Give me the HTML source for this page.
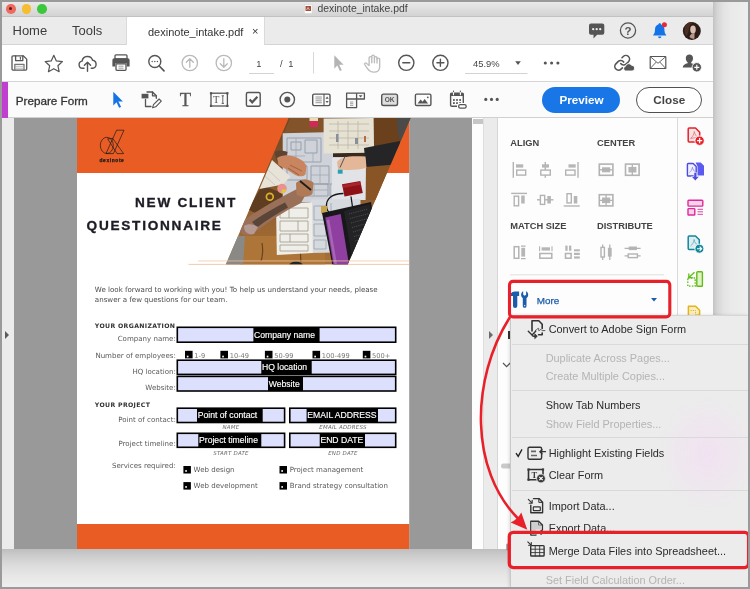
<!DOCTYPE html>
<html lang="en">
<head>
<meta charset="utf-8">
<title>dexinote_intake.pdf</title>
<style>
*{box-sizing:border-box;margin:0;padding:0}
html,body{width:750px;height:589px;overflow:hidden;background:#999}
body{position:relative;font-family:"Liberation Sans",sans-serif;color:#444}
.abs{position:absolute}
#outer{position:absolute;left:2px;top:2px;width:746px;height:585px;background:#f0f0f0;overflow:hidden;will-change:transform}
#shadowR{position:absolute;left:711px;top:0;width:35px;height:585px;background:linear-gradient(90deg,#c2c2c2 0,#d4d4d4 4px,#e2e2e2 10px,#eaeaea 18px,#eeeeee 100%)}
#shadowB{position:absolute;left:0;top:547px;width:746px;height:38px;background:linear-gradient(180deg,#bebebe 0,#cdcdcd 7px,#dbdbdb 16px,#e6e6e6 26px,#eeeeee 100%)}
#win{position:absolute;left:0;top:0;width:711px;height:547px;background:#fff;overflow:hidden}
#titlebar{position:absolute;left:0;top:0;width:711px;height:15px;background:linear-gradient(180deg,#e9e9e9,#d3d3d3);border-bottom:1px solid #c2c2c2}
.tl{position:absolute;top:2.200px;width:9.600px;height:9.600px;border-radius:50%}
#tabbar{position:absolute;left:0;top:15px;width:711px;height:28px;background:#ebebeb;border-bottom:1px solid #d4d4d4}
#tab{position:absolute;left:124px;top:0;width:139px;height:28px;background:#fff;border-left:1px solid #dadada;border-right:1px solid #dadada}
#tb1{position:absolute;left:0;top:43px;width:711px;height:37px;background:#fff;border-bottom:1px solid #d6d6d6}
#tb2{position:absolute;left:0;top:80px;width:711px;height:36px;background:#fbfbfb;border-bottom:1px solid #d0d0d0}
#doc{position:absolute;left:0;top:116px;width:470px;height:431px;background:#999;overflow:hidden}
#page{position:absolute;left:75px;top:0;width:332px;height:431px;background:#fff;overflow:hidden}
#panel{position:absolute;left:496px;top:116px;width:179.500px;height:431px;background:#fdfdfd;border-right:1px solid #d9d9d9}
#strip{position:absolute;left:675.500px;top:116px;width:35.500px;height:431px;background:#fcfcfc}
#menu{position:absolute;left:508.200px;top:312.500px;width:237.800px;height:272.500px;background:radial-gradient(ellipse 48px 58px at 196px 138px,rgba(243,222,243,.75),rgba(236,236,236,0) 100%),#ececec;border-left:1px solid #c9c9c9;border-top:1px solid #d6d6d6;box-shadow:-1px 0 3px rgba(0,0,0,.12)}
#menu .mi{position:absolute;left:37.500px;margin-top:0.500px;font-size:10.900px;color:#2a2a2a;white-space:nowrap;line-height:1}
#menu .dis{color:#b4b4b4;left:34.500px}
#menu .sep{position:absolute;left:1px;right:0;height:1px;background:#d9d9d9}
.t{position:absolute;white-space:nowrap;line-height:1}
</style>
</head>
<body>
<div id="outer">
  <div id="shadowR"></div>
  <div id="shadowB"></div>
  <div id="win">
    <div id="titlebar">
      <div class="tl" style="left:4px;background:#ee6a5f"><div class="abs" style="left:3.300px;top:3.300px;width:3px;height:3px;border-radius:50%;background:#5c1812"></div></div>
      <div class="tl" style="left:19.5px;background:#f5bd2f"></div>
      <div class="tl" style="left:35px;background:#3cc83c"></div>
      <div class="t" style="left:315.5px;top:2px;font-size:10.4px;color:#444">dexinote_intake.pdf</div>
    </div>
    <div id="tabbar">
      <div class="t" style="left:10.5px;top:7px;font-size:13px;color:#3c3c3c">Home</div>
      <div class="t" style="left:70px;top:7px;font-size:13px;color:#3c3c3c">Tools</div>
      <div id="tab">
        <div class="t" style="left:21px;top:9.800px;font-size:11px;color:#333">dexinote_intake.pdf</div>
        <div class="t" style="left:125px;top:8.600px;font-size:11px;color:#333">×</div>
      </div>
    </div>
    <div id="tb1"></div>
    <div id="tb2">
      <div class="abs" style="left:0;top:0;width:6px;height:36px;background:#c13fd0"></div>
      <div class="t" style="left:13.700px;top:12.500px;font-size:11.700px;color:#333;-webkit-text-stroke:0.300px #333">Prepare Form</div>
      <div class="abs" style="left:540px;top:5px;width:78px;height:25.500px;border-radius:13px;background:#1976e6;color:#fff;font-weight:bold;font-size:11.700px;text-align:center;line-height:26px;padding-left:1px">Preview</div>
      <div class="abs" style="left:634px;top:5px;width:65.500px;height:25.500px;border-radius:13px;background:#fff;border:1px solid #505050;color:#444;font-weight:bold;font-size:11.700px;text-align:center;line-height:24.500px;padding-left:1px">Close</div>
    </div>
    <div id="doc">
      <svg class="abs" style="left:-2px;top:-118px" width="750" height="589" viewBox="0 0 750 589" font-family="DejaVu Sans, Liberation Sans, sans-serif">
      <defs>
        <clipPath id="para"><path d="M288.700 118H410.600L347.800 264.300H225.900z"/></clipPath>
        <linearGradient id="wood" x1="0" y1="0" x2="0" y2="1"><stop offset="0" stop-color="#6f4524"/><stop offset="0.450" stop-color="#8a5a2c"/><stop offset="1" stop-color="#a87038"/></linearGradient>
      </defs>
      <rect x="77" y="118" width="332.200" height="432" fill="#fff"/>
      <rect x="77" y="118" width="332.200" height="55" fill="#e95d25"/>
      <rect x="77" y="524" width="332.200" height="26" fill="#e95d25"/>
      <!-- peach lines under photo -->
      <rect x="188.500" y="263.900" width="220.700" height="0.900" fill="#f3c4a2"/>
      <!-- photo -->
      <g clip-path="url(#para)">
        <rect x="220" y="118" width="195" height="148" fill="url(#wood)"/>
        <path d="M290 118h34v15h-40z" fill="#83532a"/>
        <path d="M262 186c8 2 18 6 26 10l-26 16c-6 2-10 0-14-3z" fill="#5e3d20"/>
        <path d="M374 118h26v30l-26 4z" fill="#6b401d"/>
        <path d="M366 166h24l-14 34h-10z" fill="#8a5526"/>
        <path d="M245 236h80v30h-85z" fill="#ad7538"/>
        <path d="M262 243c1 6 1 12-1 18M300 240c1 7 0 14 1 22" stroke="#6a4220" stroke-width="1.200" fill="none"/>
        <path d="M225 236h20l-2 30h-20z" fill="#8b8985"/>
        <path d="M397 118h14v24l-10 2c-3-8-4-16-4-26z" fill="#4b4a49"/>
        <!-- blueprint -->
        <path d="M282.700 133.300l42-1 41 1.500-.5 66-35 .5-.5 3-47-1.500z" fill="#cfd3d9"/>
        <g fill="none" stroke="#8f98a6" stroke-width="0.900">
          <path d="M287 138h34v24h-34zM291 142h10v8h-10zM305 140h12v13h-12zM287 166h20v14h-20zM311 166h18v18h-18zM300 184h28v12h-28zM333 172h28v8h-28zM330 184h10v12h-10zM346 150h16v4h-16z"/>
          <path d="M296 138v24M313 153v9M287 156h18M320 166v18M311 175h18M300 190h28M314 184v12M337 172v8M345 172v8M353 172v8" stroke="#a4acb8"/>
        </g>
        <path d="M332 158h34l-.5 42h-33.500z" fill="#e1e3e7"/>
        <path d="M310.500 199.500l50-.5.500 53-50 1z" fill="#d6dade"/>
        <g fill="none" stroke="#99a1ad" stroke-width="0.800"><path d="M314 206h12v14h-12zM314 224h12v12h-12zM314 240h12v9h-12zM331 203v22M331 230h22v18h-22z"/></g>
        <!-- top right paper on top of blueprint -->
        <path d="M333 152.500h32v4.500h-32z" fill="#3a2a1e"/>
        <path d="M323.600 118.600l50-.6.500 34.500-50.500 1z" fill="#e6e2d3"/>
        <g stroke="#bcb6a4" stroke-width="0.800" fill="none"><path d="M329 124h40M329 131h40M329 138h40M329 145h40M338 121v28M348 121v28M358 121v28"/></g>
        <rect x="336" y="134" width="2.500" height="8" fill="#8a8f99"/><rect x="355" y="138" width="3" height="6" fill="#8a8f99"/><rect x="364" y="136" width="2" height="6" fill="#b86a4a"/>
        <!-- lower-left sketch paper -->
        <path d="M276 204l36-1.500.800 50.500-36 2z" fill="#efeee8"/>
        <g fill="none" stroke="#9c988c" stroke-width="0.800"><path d="M280 208h28v10h-28zM280 221h28v10h-28zM280 234h28v8h-28zM280 245h28v6h-28zM289 208v10M298 221v10M290 234v8"/></g>
        <!-- left notebook -->
        <path d="M272 160l18.500 16.500-7.500 8-23.500 4.500z" fill="#e7e3d8"/>
        <path d="M268 170l12 11M265 176l10 9" stroke="#c5bfb0" stroke-width="0.700"/>
        <!-- sleeve + right hand -->
        <path d="M364 148l36-7v23l-34 3z" fill="#252528"/>
        <path d="M337 162c3-5 12-6.500 28.500-5.500l1 11c-9 3-21 3-28.500 1.500z" fill="#e3b797"/>
        <path d="M345 156.500l-5 11" stroke="#555" stroke-width="1"/>
        <rect x="337.800" y="169.600" width="4.800" height="4.100" fill="#2a9fb0"/>
        <!-- left hand -->
        <path d="M274.500 152c3-2 8-2 13 0l-1.500 7-9 3z" fill="#5e4232"/>
        <path d="M277 158c7-5 18-3 26 3l3.500 4.500-1 9c-3 3-8 2-12-.5l-6-4-9-5z" fill="#c98560"/>
        <path d="M290 165l12 6M288 168l11 7" stroke="#9a5f40" stroke-width="0.900"/>
        <!-- arm w/ tattoo + hand with pen -->
        <path d="M243 221c12-9 34-22 54-32l9 5-5 9c-18 9-36 21-48 31-5 3-12 1-14-4-1-4 1-7 4-9z" fill="#9a7058"/>
        <path d="M252 222c10-7 22-14 33-19.500l3 5c-11 6-22 13-31 20z" fill="#5a4538"/>
        <path d="M244 226c4-3 10-2 14 1l-4 7c-5 1-10-1-10-8z" fill="#b59a94"/>
        <path d="M296 183c5-4.500 12-4.500 17.500-.5l-1 11.500c-5 3.500-11 3.500-16 .5z" fill="#b07a56"/>
        <path d="M300 181l11 9" stroke="#1c1c1c" stroke-width="1.800"/>
        <!-- red box -->
        <path d="M342 184.300l18.300-3.300 2.500 12-18.300 3.500z" fill="#8f1118"/>
        <path d="M342.500 185l17.500-3.200.8 3-17.600 3.300z" fill="#a8232a"/>
        <!-- cable -->
        <path d="M343.500 193.500c-12 0-17.500 5.500-17 13s8 10 16 6M351 196.500l2 14" fill="none" stroke="#161616" stroke-width="1.300"/>
        <!-- tape & stickers -->
        <circle cx="282" cy="188.600" r="4.800" fill="#e9938f"/><path d="M282 189.500h4.700a4.800 4.800 0 0 1-5.700 3.800z" fill="#e3c63c"/>
        <circle cx="269.800" cy="196.800" r="3.400" fill="none" stroke="#d8b02e" stroke-width="1.700"/>
        <rect x="309.500" y="118" width="8.500" height="3" fill="#e8dcb0"/><rect x="309.500" y="121" width="8.500" height="6" fill="#cf2a58"/>
        <rect x="321" y="206" width="6" height="7.500" fill="#c9a348"/>
        <!-- laptop -->
        <path d="M322 213l49-11 10 66h-48z" fill="#18181a"/>
        <path d="M325.200 217.500l15.500-3.500 8.500 52h-15.500z" fill="#8e3f9f"/>
        <path d="M326.800 220l2.500-.6 8 46.600h-2.500z" fill="#a765b5"/>
        <path d="M344 211l26-7 4 46-22 8z" fill="#232326"/>
        <g stroke="#55555c" stroke-width="0.800" stroke-dasharray="1.200 1"><path d="M349 214l19-5M350 218.500l19-5M351 223l19-5M352 227.500l18-5M353 232l17-5M354 236.500l15-4M355 241l12-3"/></g>
        <path d="M289 266a7 4.500 0 0 1 14 0z" fill="#262626"/>
      </g>
      <rect x="198" y="260.500" width="211.200" height="0.900" fill="#f3c4a2" opacity="0.850"/>
      <!-- logo -->
      <g fill="none" stroke="#1a1a1a" stroke-width="0.700" stroke-linejoin="round">
        <ellipse cx="106.800" cy="145.400" rx="6.500" ry="8.100"/>
        <path d="M116.600 130.200h7.400l-10.600 23.400h-7.400z"/>
        <path d="M107.600 138.800l5.100-.4 10.900 15.200h-6.600z"/>
      </g>
      <text x="112" y="161.700" font-family="Liberation Sans, sans-serif" font-size="4.900" font-weight="bold" fill="#1a1a1a" stroke="#1a1a1a" stroke-width="0.250" text-anchor="middle" letter-spacing="0.600">dexinote</text>
      <!-- heading -->
      <g font-family="Liberation Sans, sans-serif" font-weight="bold" font-size="13.600" fill="#1c1c24" stroke="#1c1c24" stroke-width="0.350" letter-spacing="1.750">
        <text x="135" y="206.700">NEW CLIENT</text>
        <text x="86.600" y="229.600">QUESTIONNAIRE</text>
      </g>
<g font-size="7.050" fill="#5a5a5a">
<g font-weight="bold" fill="#333" font-size="6.200" letter-spacing="0.350"><text x="94.800" y="327.700">YOUR ORGANIZATION</text><text x="94.800" y="406.600">YOUR PROJECT</text></g>
<g text-anchor="end"><text x="175.800" y="340.7">Company name:</text><text x="175.800" y="357.8">Number of employees:</text><text x="175.800" y="373.8">HQ location:</text><text x="175.800" y="389.6">Website:</text><text x="175.800" y="421.7">Point of contact:</text><text x="175.800" y="446">Project timeline:</text><text x="175.800" y="468">Services required:</text></g>
<rect x="177.3" y="327.3" width="218.4" height="14.9" fill="#dde0fd" stroke="#000" stroke-width="1.600"/><rect x="253.4" y="327.3" width="66.2" height="14.9" fill="#000"/><text x="254.1" y="337.6" font-family="Liberation Sans, sans-serif" font-size="8.650" fill="#fff" stroke="#fff" stroke-width="0.150">Company name</text>
<rect x="177.3" y="360.2" width="218.4" height="14.2" fill="#dde0fd" stroke="#000" stroke-width="1.600"/><rect x="261.3" y="360.2" width="50.4" height="14.2" fill="#000"/><text x="262.0" y="370.2" font-family="Liberation Sans, sans-serif" font-size="8.650" fill="#fff" stroke="#fff" stroke-width="0.150">HQ location</text>
<rect x="177.3" y="376.4" width="218.4" height="14.6" fill="#dde0fd" stroke="#000" stroke-width="1.600"/><rect x="268" y="376.4" width="35.0" height="14.6" fill="#000"/><text x="268.7" y="386.6" font-family="Liberation Sans, sans-serif" font-size="8.650" fill="#fff" stroke="#fff" stroke-width="0.150">Website</text>
<rect x="177.3" y="408.2" width="107.3" height="14.3" fill="#dde0fd" stroke="#000" stroke-width="1.600"/><rect x="197" y="408.2" width="65.7" height="14.3" fill="#000"/><text x="197.7" y="418.2" font-family="Liberation Sans, sans-serif" font-size="8.650" fill="#fff" stroke="#fff" stroke-width="0.150">Point of contact</text>
<rect x="289.8" y="408.2" width="105.9" height="14.3" fill="#dde0fd" stroke="#000" stroke-width="1.600"/><rect x="306.6" y="408.2" width="71.4" height="14.3" fill="#000"/><text x="307.3" y="418.2" font-family="Liberation Sans, sans-serif" font-size="8.650" fill="#fff" stroke="#fff" stroke-width="0.150">EMAIL ADDRESS</text>
<rect x="177.3" y="433.3" width="107.3" height="14.0" fill="#dde0fd" stroke="#000" stroke-width="1.600"/><rect x="198.3" y="433.3" width="63.0" height="14.0" fill="#000"/><text x="199.0" y="443.2" font-family="Liberation Sans, sans-serif" font-size="8.650" fill="#fff" stroke="#fff" stroke-width="0.150">Project timeline</text>
<rect x="289.8" y="433.3" width="105.9" height="14.0" fill="#dde0fd" stroke="#000" stroke-width="1.600"/><rect x="319.7" y="433.3" width="45.3" height="14.0" fill="#000"/><text x="320.4" y="443.2" font-family="Liberation Sans, sans-serif" font-size="8.650" fill="#fff" stroke="#fff" stroke-width="0.150">END DATE</text>
<rect x="185" y="350.8" width="7.6" height="7.6" fill="#000"/><rect x="186.8" y="355.7" width="1.700" height="1.700" fill="#f4f4f4"/><text x="194.3" y="357.700" fill="#777" font-size="6.700">1-9</text><rect x="220.4" y="350.8" width="7.6" height="7.6" fill="#000"/><rect x="222.20000000000002" y="355.7" width="1.700" height="1.700" fill="#f4f4f4"/><text x="229.70000000000002" y="357.700" fill="#777" font-size="6.700">10-49</text><rect x="264.9" y="350.8" width="7.6" height="7.6" fill="#000"/><rect x="266.7" y="355.7" width="1.700" height="1.700" fill="#f4f4f4"/><text x="274.2" y="357.700" fill="#777" font-size="6.700">50-99</text><rect x="312.5" y="350.8" width="7.6" height="7.6" fill="#000"/><rect x="314.3" y="355.7" width="1.700" height="1.700" fill="#f4f4f4"/><text x="321.8" y="357.700" fill="#777" font-size="6.700">100-499</text><rect x="362.8" y="350.8" width="7.6" height="7.6" fill="#000"/><rect x="364.6" y="355.7" width="1.700" height="1.700" fill="#f4f4f4"/><text x="372.1" y="357.700" fill="#777" font-size="6.700">500+</text>
<g font-style="italic" font-size="5.500" fill="#6a6a6a" text-anchor="middle" letter-spacing="0.200"><text x="231" y="429">NAME</text><text x="343" y="429">EMAIL ADDRESS</text><text x="231" y="454.700">START DATE</text><text x="343" y="454.700">END DATE</text></g>
<rect x="183.4" y="466" width="7.5" height="7.5" fill="#000"/><rect x="185.20000000000002" y="470.1" width="1.700" height="1.700" fill="#f4f4f4"/><text x="193.6" y="472">Web design</text><rect x="279.5" y="466" width="7.5" height="7.5" fill="#000"/><rect x="281.3" y="470.1" width="1.700" height="1.700" fill="#f4f4f4"/><text x="289.7" y="472">Project management</text><rect x="183.4" y="482.1" width="7.5" height="7.5" fill="#000"/><rect x="185.20000000000002" y="486.1" width="1.700" height="1.700" fill="#f4f4f4"/><text x="193.6" y="488.1">Web development</text><rect x="279.5" y="482.1" width="7.5" height="7.5" fill="#000"/><rect x="281.3" y="486.1" width="1.700" height="1.700" fill="#f4f4f4"/><text x="289.7" y="488.1">Brand strategy consultation</text>
</g>
      <!-- intro -->
      <g font-size="7.100" fill="#4a4a4a">
        <text x="94.800" y="291.600">We look forward to working with you! To help us understand your needs, please</text>
        <text x="94.800" y="301.700">answer a few questions for our team.</text>
      </g>
    </svg>

    </div>
    <div class="abs" style="left:470px;top:116px;width:12px;height:431px;background:#fdfdfd;border-right:1px solid #dedede"><div class="abs" style="left:1px;top:0.500px;width:10px;height:5px;background:#c6c6c6"></div></div>
    <div class="abs" style="left:482px;top:116px;width:14px;height:431px;background:#ebebeb;border-right:1px solid #d6d6d6"><div class="abs" style="left:5px;top:212.500px;width:0;height:0;border-left:4.500px solid #6a6a6a;border-top:4px solid transparent;border-bottom:4px solid transparent"></div></div>
    <div class="abs" style="left:0;top:116px;width:12px;height:431px;background:#ebebeb"><div class="abs" style="left:3px;top:212.500px;width:0;height:0;border-left:4.500px solid #5a5a5a;border-top:4.200px solid transparent;border-bottom:4.200px solid transparent"></div></div>
    <div id="panel"><svg class="abs" style="left:-498px;top:-118px" width="750" height="589" viewBox="0 0 750 589" font-family="Liberation Sans, sans-serif">
      <g font-size="9.300" font-weight="bold" fill="#444">
        <text x="510.300" y="146.200">ALIGN</text><text x="597" y="146.200">CENTER</text>
        <text x="510.300" y="229.400">MATCH SIZE</text><text x="597" y="229.400">DISTRIBUTE</text>
      </g>
      <g fill="none" stroke="#b3b3b3" stroke-width="1.200">
        <!-- align left -->
        <path d="M513.300 162v15.700" stroke-width="1.400"/><rect x="516" y="164.300" width="7.200" height="3.300" fill="#b6b6b6" stroke="none"/><rect x="516.700" y="170.100" width="9" height="5" stroke-width="1.400"/>
        <!-- align center h -->
        <path d="M545.300 162v15.700" stroke-width="1.400"/><rect x="542" y="164.300" width="7" height="3.300" fill="#b6b6b6" stroke="none"/><rect x="540.800" y="170.100" width="9.500" height="5" fill="#fdfdfd" stroke-width="1.400"/>
        <!-- align right -->
        <path d="M578 162v15.700" stroke-width="1.400"/><rect x="568.500" y="164.300" width="7.200" height="3.300" fill="#b6b6b6" stroke="none"/><rect x="565.700" y="170.100" width="9.300" height="5" stroke-width="1.400"/>
        <!-- center 1 -->
        <rect x="599.300" y="164.100" width="13.600" height="11.200" stroke-width="1.600"/><rect x="602" y="167.300" width="8.200" height="5" fill="#b6b6b6" stroke="none"/><path d="M599.300 169.800h13.600" stroke-width="1.300"/>
        <!-- center 2 -->
        <rect x="625.500" y="164.100" width="13.600" height="11.200" stroke-width="1.600"/><rect x="628.400" y="166.900" width="8" height="5.600" fill="#b6b6b6" stroke="none"/><path d="M632.300 164.100v11.200" stroke-width="1.300"/>
        <!-- row 2: align top -->
        <path d="M511.200 193.400h15.800" stroke-width="1.400"/><rect x="514.200" y="196.200" width="4.400" height="9.600" stroke-width="1.400"/><rect x="521.200" y="195.500" width="3.500" height="8" fill="#b6b6b6" stroke="none"/>
        <!-- align middle v -->
        <path d="M537 199.800h16.500" stroke-width="1.400"/><rect x="540.400" y="195.400" width="4.300" height="9" fill="#fdfdfd" stroke-width="1.400"/><rect x="547.300" y="196" width="3.600" height="7.500" fill="#b6b6b6" stroke="none"/>
        <!-- align bottom -->
        <path d="M563.700 206h16" stroke-width="1.400"/><rect x="567" y="193.700" width="4.300" height="9.200" stroke-width="1.400"/><rect x="573.800" y="196" width="3.500" height="7.500" fill="#b6b6b6" stroke="none"/>
        <!-- center both -->
        <rect x="599.300" y="194.700" width="13.600" height="11.200" stroke-width="1.600"/><rect x="602" y="197.500" width="8.200" height="5.600" fill="#b6b6b6" stroke="none"/><path d="M599.300 200.300h13.600M606.100 194.700v11.200" stroke-width="1.300"/>
        <!-- match size -->
        <rect x="514.200" y="246.700" width="4.600" height="11.600" stroke-width="1.500"/><rect x="521.300" y="247.800" width="3.800" height="8.800" fill="#b6b6b6" stroke="none"/><path d="M521 246.100h4.600M521 258.600h4.600" stroke-width="1.100"/>
        <rect x="539.800" y="253.500" width="12" height="4.700" stroke-width="1.500"/><rect x="541.600" y="247.300" width="8.400" height="3.300" fill="#b6b6b6" stroke="none"/><path d="M539.600 246.300v5M552 246.300v5" stroke-width="1.100"/>
        <rect x="565.500" y="253.500" width="5.600" height="4.700" stroke-width="1.500"/><rect x="565.300" y="245.600" width="2.300" height="5.200" fill="#b6b6b6" stroke="none"/><rect x="569" y="245.600" width="2.300" height="5.200" fill="#b6b6b6" stroke="none"/><rect x="574" y="249.300" width="5.800" height="2" fill="#b6b6b6" stroke="none"/><rect x="574" y="252.800" width="5.800" height="2.200" fill="#b6b6b6" stroke="none"/><rect x="574" y="256.400" width="5.800" height="2.200" fill="#b6b6b6" stroke="none"/>
        <!-- distribute -->
        <rect x="601" y="247.400" width="3.400" height="9.600" stroke-width="1.400"/><rect x="607.900" y="247.800" width="3.800" height="8.800" fill="#b6b6b6" stroke="none"/><path d="M602.700 244.600v3M602.700 257v3M609.800 244.600v15.400" stroke-width="1.300"/>
        <rect x="628.200" y="254" width="9.200" height="3.600" stroke-width="1.400"/><rect x="628.700" y="246.500" width="8.200" height="3.600" fill="#b6b6b6" stroke="none"/><path d="M624.600 248.300h16M624.600 255.800h3.600M637.400 255.800h3.200" stroke-width="1.300"/>
      </g>
      <rect x="510" y="274.400" width="154" height="0.900" fill="#dcdcdc"/>
      <!-- More row -->
      <g fill="#1b5cab">
        <path d="M511 293.200c1.500-1.300 3.300-1.600 5.200-1.600h2.900v4.300h-1.800v10a2.150 2.150 0 0 1-4.300 0v-10h-2z"/>
        <path d="M523.200 291.200v3.600l1.450.9 1.450-.9v-3.600c1.300.6 2.100 2 2.100 3.500 0 1.500-.6 2.600-1.700 3.300v7.900a1.850 1.850 0 0 1-3.700 0v-7.900c-1.100-.700-1.700-1.800-1.700-3.300 0-1.500.8-2.900 2.100-3.500z"/>
        <circle cx="524.650" cy="305.600" r="0.700" fill="#fff"/>
        <path d="M651 298h6l-3 3.600z"/>
      </g>
      <text x="536.700" y="303.800" font-size="9.900" fill="#1b5cab" stroke="#1b5cab" stroke-width="0.250">More</text>
      <!-- hidden-behind-menu bits -->
      <path d="M503 363l3.600 3.600 3.600-3.600" fill="none" stroke="#555" stroke-width="1.200"/>
      <rect x="508" y="331" width="2.500" height="8" fill="#333"/>
      <rect x="501" y="463.500" width="12" height="5" rx="2.500" fill="#c9c9c9"/>
    </svg>
</div>
    <div id="strip"><svg class="abs" style="left:-677.500px;top:-118px" width="750" height="589" viewBox="0 0 750 589">
      <!-- red create pdf -->
      <path d="M689.200 128h6.300l4.200 4.200v9.800h-10.500a1 1 0 0 1-1-1v-12a1 1 0 0 1 1-1z" fill="#f7e3e3" stroke="#e8202a" stroke-width="1.500" stroke-linejoin="round"/>
      <path d="M690.500 138.500c2-1.500 3.500-4 3.800-7 .5 3 2 5 4 6-2.500 0-5.500.5-7.800 1z" fill="none" stroke="#e8606a" stroke-width="0.700"/>
      <circle cx="699.600" cy="140.700" r="4.700" fill="#e8202a" stroke="#fff" stroke-width="0.900"/><path d="M697 140.700h5.200M699.600 138.100v5.200" stroke="#fff" stroke-width="1.300"/>
      <!-- blue export -->
      <path d="M688.200 163.500h5l3 3v9.500h-8a.8.800 0 0 1-.8-.8v-10.900a.8.800 0 0 1 .8-.8z" fill="#eeeefc" stroke="#4b4be0" stroke-width="1.400" stroke-linejoin="round"/>
      <path d="M695.500 162.500h5.200l3.300 3.300v9.700h-6.500v-9.200z" fill="#5a5af0"/>
      <path d="M689.500 172.500c1.500-1.200 2.600-3 2.900-5.300.4 2.300 1.500 3.800 3 4.600" fill="none" stroke="#7a7ae8" stroke-width="0.700"/>
      <path d="M694 172.500h2.600v4h2.600l-3.900 4.300-3.900-4.300h2.600z" fill="#4b4be0" stroke="#fff" stroke-width="0.500"/>
      <!-- pink organize -->
      <rect x="688" y="200.300" width="14.800" height="5.800" rx="0.800" fill="#f8d4ea" stroke="#e0289a" stroke-width="1.400"/>
      <rect x="688" y="208.600" width="6.800" height="6.400" rx="0.600" fill="#f8d4ea" stroke="#e0289a" stroke-width="1.400"/>
      <path d="M697.500 209.300h5.500M697.500 211.800h5.500M697.500 214.300h5.500" stroke="#e0289a" stroke-width="0.900"/>
      <!-- teal send -->
      <path d="M689.200 236h6.300l3.800 3.800v9.700h-10.100a1 1 0 0 1-1-1v-11.500a1 1 0 0 1 1-1z" fill="#dcecf0" stroke="#12869a" stroke-width="1.500" stroke-linejoin="round"/>
      <path d="M690.500 246c2-1.500 3.300-3.600 3.600-6.500.5 2.800 1.800 4.600 3.600 5.600" fill="none" stroke="#4aa3b3" stroke-width="0.700"/>
      <circle cx="699.400" cy="248.700" r="4.500" fill="#12869a" stroke="#fff" stroke-width="0.900"/><path d="M697 248.700h4.400M699.600 246.600l2.100 2.100-2.100 2.100" stroke="#fff" stroke-width="1.100" fill="none"/>
      <!-- green -->
      <rect x="696.800" y="271.800" width="5.600" height="14.400" rx="0.800" fill="#e0f3c8" stroke="#62bd18" stroke-width="1.400"/>
      <rect x="687.800" y="278" width="7.400" height="8.200" fill="none" stroke="#62bd18" stroke-width="1.300" stroke-dasharray="1.600 1.300"/>
      <path d="M694.500 272.300l-5.300 5M688.800 273.600v4h4" stroke="#62bd18" stroke-width="1.300" fill="none"/>
      <!-- yellow -->
      <path d="M688.400 306.300h7.200l4 4v8.700h-11.200z" fill="#f8ecc0" stroke="#e6b417" stroke-width="1.500" stroke-linejoin="round"/>
      <path d="M690.500 310.500h5v4h4" fill="none" stroke="#e6b417" stroke-width="1" stroke-dasharray="1.200 1"/>
    </svg>
</div>
  </div>

<svg id="chrome" class="abs" style="left:-2px;top:-2px" width="750" height="589" viewBox="0 0 750 589" font-family="Liberation Sans, sans-serif">
  <!-- title pdf icon -->
  <rect x="304.5" y="4.5" width="7.5" height="9" fill="#fff" stroke="#d9d0cc" stroke-width="0.5"/>
  <rect x="305.5" y="6" width="5.5" height="5" fill="#a0503c"/>
  <path d="M306.5 10 L308 7.5 L309.5 10" stroke="#f3e3dc" stroke-width="0.7" fill="none"/>
  <!-- tabbar right icons -->
  <g id="chat"><path d="M591 23.5h11.3a2 2 0 0 1 2 2v7.2a2 2 0 0 1-2 2h-5.2l-3.6 3.8v-3.8h-2.5a2 2 0 0 1-2-2v-7.2a2 2 0 0 1 2-2z" fill="#555"/>
    <circle cx="593.2" cy="29.2" r="1.15" fill="#eee"/><circle cx="596.7" cy="29.2" r="1.15" fill="#eee"/><circle cx="600.2" cy="29.2" r="1.15" fill="#eee"/></g>
  <g id="help"><circle cx="628" cy="30.5" r="7.6" fill="none" stroke="#555" stroke-width="1.3"/>
    <text x="628" y="34.6" font-size="11.5" font-weight="bold" fill="#555" text-anchor="middle">?</text></g>
  <g id="bell"><path d="M659.7 23.2c1 0 1.4.7 1.4 1.4 2.2.7 3.3 2.6 3.3 5 0 2.600.6 4.300 1.800 5.400v.6h-13v-.6c1.200-1.100 1.800-2.800 1.800-5.400 0-2.400 1.100-4.300 3.300-5 0-.7.400-1.400 1.400-1.400z" fill="#1473e6"/>
    <path d="M658 36.600h3.400a1.700 1.700 0 0 1-3.400 0z" fill="#1473e6"/>
    <circle cx="664.4" cy="24.800" r="2.500" fill="#e8283a"/></g>
  <g id="avatar"><circle cx="691.8" cy="31" r="9" fill="#2b1c17"/>
    <ellipse cx="693" cy="29.500" rx="2.800" ry="4" fill="#d9bdb0"/>
    <path d="M689.500 36.500c1-2.500 3-3.500 5-3.500v5.500c-2 .5-4 0-5-2z" fill="#b89588"/>
    <path d="M685 27c1-4 5-6 9-4.500-3 .5-4.500 3-5 6s-1 6-2.500 7.500c-2-2-2.500-6-1.500-9z" fill="#4a2e22"/></g>

  <!-- ===== toolbar 1 ===== -->
  <g fill="none" stroke="#555" stroke-width="1.300" stroke-linejoin="round" stroke-linecap="round">
    <!-- save -->
    <path d="M13 55.800h10.200l3.500 3.300v10a1 1 0 0 1-1 1h-12.700a1 1 0 0 1-1-1v-12.300a1 1 0 0 1 1-1z"/>
    <path d="M15.600 56v4.600h7.200v-4.600"/>
    <path d="M14.800 70v-5.700h9.200v5.700" stroke="#777"/>
    <path d="M15.500 66.300h7.800M15.500 68.200h7.800" stroke="#aaa" stroke-width="0.800"/>
    <path d="M20.400 57.300v2" stroke-width="1.100"/>
    <!-- star -->
    <path d="M53.800 55.300l2.550 5.600 6.100.65-4.550 4.150 1.250 6-5.350-3.050-5.350 3.050 1.250-6-4.550-4.150 6.100-.65z" stroke-width="1.200"/>
    <!-- cloud upload -->
    <path d="M84 68.300h-1.400a3.600 3.600 0 0 1-.5-7.150 5.400 5.400 0 0 1 10.500-.9 4.100 4.100 0 0 1 .3 8.050h-1.700" stroke-width="1.400"/>
    <path d="M87.500 71.300v-8.500M84.400 65.300l3.100-3.100 3.100 3.100" stroke-width="1.400"/>
  </g>
  <!-- printer -->
  <g>
    <path d="M116 54.800h10a1 1 0 0 1 1 1v3h-12v-3a1 1 0 0 1 1-1z" fill="none" stroke="#555" stroke-width="1.300"/>
    <path d="M114.200 58.300h13.600a1.800 1.800 0 0 1 1.800 1.800v6.500h-2.800v-3h-11.600v3h-2.800v-6.500a1.800 1.800 0 0 1 1.800-1.800z" fill="#555"/>
    <rect x="116" y="63.800" width="10" height="6.500" rx="0.800" fill="#fff" stroke="#555" stroke-width="1.300"/>
    <path d="M118.500 66.200h5M118.500 68.200h5" stroke="#888" stroke-width="0.800"/>
  </g>
  <!-- zoom magnifier -->
  <g fill="none" stroke="#555" stroke-width="1.400" stroke-linecap="round">
    <circle cx="154.800" cy="61.500" r="6"/>
    <path d="M159.300 66l4.700 4.800" stroke-width="1.700"/>
    <circle cx="152.200" cy="61.500" r="0.700" fill="#555" stroke="none"/><circle cx="154.800" cy="61.500" r="0.700" fill="#555" stroke="none"/><circle cx="157.400" cy="61.500" r="0.700" fill="#555" stroke="none"/>
  </g>
  <!-- up/down (disabled) -->
  <g fill="none" stroke="#b9b9b9" stroke-width="1.300" stroke-linecap="round" stroke-linejoin="round">
    <circle cx="189.800" cy="63" r="7.700"/>
    <path d="M189.800 67.300v-8.300M186.300 62.200l3.500-3.500 3.500 3.500"/>
    <circle cx="223.800" cy="63" r="7.700"/>
    <path d="M223.800 58.700v8.300M220.300 63.800l3.500 3.500 3.500-3.500"/>
  </g>
  <text x="258.800" y="66.800" font-size="9.400" fill="#444" text-anchor="middle">1</text>
  <rect x="249" y="73" width="25" height="0.800" fill="#c8c8c8"/>
  <text x="280" y="66.800" font-size="9.400" fill="#444">/</text>
  <text x="288.300" y="66.800" font-size="9.400" fill="#444">1</text>
  <rect x="313" y="52" width="0.900" height="21.500" fill="#d4d4d4"/>
  <!-- grey cursor -->
  <path d="M334.300 55.300l9.300 9.500h-4.400l2.600 5.400-1.900.9-2.600-5.500-3 3.100z" fill="#b4b4b4"/>
  <!-- hand -->
  <g fill="none" stroke="#bdbdbd" stroke-width="1.150" stroke-linejoin="round" stroke-linecap="round" transform="translate(364.200 0) scale(1.200 1.030) translate(-364.200 -1.800)">
    <path d="M368.300 63.500v-5.700a1.100 1.100 0 0 1 2.200 0v-1.300a1.100 1.100 0 0 1 2.200 0v1.300a1.100 1.100 0 0 1 2.200 0v1.500a1.100 1.100 0 0 1 2.200 0v7.200c0 3.300-2 5.300-5 5.300-2.600 0-3.800-1.100-5-3.100l-2.500-4.300c-.6-1.100.7-2 1.600-1.100l2.100 2.200z"/>
    <path d="M370.500 57.800v5M372.700 57.800v5M374.900 58.500v4.500"/>
  </g>
  <!-- minus / plus -->
  <g fill="none" stroke="#555" stroke-width="1.400" stroke-linecap="round">
    <circle cx="406.300" cy="62.800" r="7.600"/><path d="M402.800 62.800h7"/>
    <circle cx="440.400" cy="62.800" r="7.600"/><path d="M436.900 62.800h7M440.400 59.300v7"/>
  </g>
  <text x="473" y="66.800" font-size="9.400" fill="#444">45.9%</text>
  <rect x="465" y="73" width="62.500" height="0.800" fill="#c8c8c8"/>
  <path d="M515.200 61.300h5.600l-2.800 3.600z" fill="#555"/>
  <circle cx="545.300" cy="63" r="1.550" fill="#555"/><circle cx="551.600" cy="63" r="1.550" fill="#555"/><circle cx="557.900" cy="63" r="1.550" fill="#555"/>
  <!-- link + cloud -->
  <g fill="none" stroke="#555" stroke-width="2.150" stroke-linecap="round" stroke-linejoin="round" transform="translate(613.300 53.900) scale(0.740)">
    <path d="M10 13a5 5 0 0 0 7.540.540l3-3a5 5 0 0 0-7.070-7.070l-1.720 1.710"/>
    <path d="M14 11a5 5 0 0 0-7.540-.540l-3 3a5 5 0 0 0 7.070 7.070l1.710-1.710"/>
  </g>
  <path d="M625.300 71a2.700 2.700 0 0 1-.1-5.300 3.600 3.600 0 0 1 6.700-1 3.100 3.100 0 0 1 .6 6.300z" fill="#555" stroke="#fff" stroke-width="1" transform="translate(628.500 71) scale(0.900) translate(-628.500 -71)"/>
  <!-- mail -->
  <g fill="none" stroke="#555" stroke-width="1.200" stroke-linejoin="round">
    <rect x="650.200" y="56.500" width="15.600" height="12" rx="0.600"/>
    <path d="M650.500 56.800l7.500 6.500 7.500-6.500M650.500 68.200l5.800-6.200M665.500 68.200l-5.800-6.200" stroke-width="0.900"/>
  </g>
  <!-- person + -->
  <path d="M689.400 54.400a3.600 3.600 0 0 1 3.600 3.800c0 1.800-.8 3.200-1.800 4v1c2.600.7 4.600 1.600 4.900 4.300h-13.400c.3-2.700 2.300-3.600 4.900-4.300v-1c-1-.8-1.800-2.200-1.800-4a3.600 3.600 0 0 1 3.600-3.800z" fill="#555"/>
  <circle cx="696.800" cy="67.300" r="4.700" fill="#555" stroke="#fff" stroke-width="0.900"/>
  <path d="M694.300 67.300h5M696.800 64.800v5" stroke="#fff" stroke-width="1.200"/>

  <!-- ===== toolbar 2 ===== -->
  <path d="M113.300 91.800l9.600 9.600h-4.500l2.700 5.500-2 .900-2.600-5.600-3.200 3.200z" fill="#1473e6"/>
  <!-- edit icon -->
  <g fill="none" stroke="#555" stroke-width="1.300" stroke-linejoin="round" stroke-linecap="round">
    <path d="M147 92h5.500l3.800 3.800v2.500"/><path d="M152.500 92v3.800h3.800"/>
    <path d="M145.500 99.500v7h5.500"/>
    <path d="M152.500 107.800l1-3.200 5.600-5.600 2.200 2.200-5.600 5.600z" stroke-width="1.100"/>
  </g>
  <rect x="141.600" y="93.800" width="6.800" height="4.600" fill="#555"/>
  <text x="185.400" y="105.600" font-family="Liberation Serif, serif" font-size="18.600" fill="#555" stroke="#555" stroke-width="0.300" text-anchor="middle">T</text>
  <!-- TI box -->
  <g>
    <rect x="211" y="93.200" width="16.400" height="12.800" fill="none" stroke="#555" stroke-width="1.300"/>
    <rect x="209.900" y="92.200" width="2.200" height="2.200" fill="#555"/><rect x="226.300" y="92.200" width="2.200" height="2.200" fill="#555"/>
    <rect x="209.900" y="104.800" width="2.200" height="2.200" fill="#555"/><rect x="226.300" y="104.800" width="2.200" height="2.200" fill="#555"/>
    <text x="216.300" y="103.300" font-family="Liberation Serif, serif" font-size="10.500" fill="#555" text-anchor="middle">T</text>
    <path d="M222.800 95.800v7.600M221.600 95.800h2.400M221.600 103.400h2.400" stroke="#555" stroke-width="0.900" fill="none"/>
  </g>
  <!-- checkbox -->
  <rect x="246.400" y="92.500" width="13.800" height="13.800" rx="1.500" fill="none" stroke="#555" stroke-width="1.400"/>
  <path d="M249.600 99.600l2.600 2.700 5.200-5.600" fill="none" stroke="#555" stroke-width="2.200"/>
  <!-- radio -->
  <circle cx="287.300" cy="99.600" r="7.200" fill="none" stroke="#555" stroke-width="1.400"/><circle cx="287.300" cy="99.600" r="3" fill="#555"/>
  <!-- list box -->
  <g>
    <rect x="312.700" y="94.100" width="17.300" height="11.500" rx="1.500" fill="none" stroke="#555" stroke-width="1.400"/>
    <path d="M324 94.100v11.500" stroke="#555" stroke-width="1.100"/>
    <path d="M315.500 97h6.300M315.500 98.900h6.300M315.500 100.800h6.300M315.500 102.700h6.300" stroke="#999" stroke-width="1"/>
    <path d="M325.500 98.800h3.200l-1.600-2.200zM325.500 100.900h3.200l-1.600 2.200z" fill="#555"/>
  </g>
  <!-- dropdown -->
  <g fill="none" stroke="#555" stroke-width="1.300" stroke-linejoin="round">
    <path d="M346.600 93.200h17.800v5.800h-17.800z"/><path d="M356.600 93.200v5.800"/>
    <path d="M346.600 99v8.600h10v-8.600"/>
    <path d="M350 102h3.300M350 103.700h3.300M350 105.400h3.300" stroke="#888" stroke-width="0.800"/>
    <path d="M358.700 95.200h3.800l-1.900 2.300z" fill="#555" stroke="none"/>
  </g>
  <!-- OK -->
  <rect x="381.700" y="94.100" width="15.800" height="11.400" rx="1.800" fill="#dedede" stroke="#555" stroke-width="1.400"/>
  <text x="389.600" y="102.300" font-size="6.600" font-weight="bold" fill="#555" text-anchor="middle">OK</text>
  <!-- image -->
  <rect x="415.400" y="94.100" width="15.500" height="11.400" rx="1.300" fill="none" stroke="#555" stroke-width="1.400"/>
  <path d="M417.600 103.400l3-4 2 2.400 2-2.900 3.500 4.500z" fill="#555"/><circle cx="427.800" cy="97.300" r="0.900" fill="#555"/>
  <!-- calendar -->
  <g>
    <rect x="450.600" y="93.100" width="12.700" height="13.200" rx="1.200" fill="none" stroke="#555" stroke-width="1.400"/>
    <rect x="450.600" y="93.100" width="12.700" height="2.900" fill="#555"/>
    <path d="M453.500 91v1.400M460.400 91v1.400" stroke="#555" stroke-width="1" stroke-linecap="round"/>
    <path d="M453.500 92.600v2.200M460.400 92.600v2.200" stroke="#fff" stroke-width="1.100" stroke-linecap="round"/>
    <g fill="#5a5a5a"><rect x="453" y="99.100" width="1.800" height="1.800"/><rect x="456.100" y="99.100" width="1.800" height="1.800"/><rect x="459.200" y="99.100" width="1.800" height="1.800"/>
    <rect x="453" y="102.200" width="1.800" height="1.800"/><rect x="456.100" y="102.200" width="1.800" height="1.800"/><rect x="459.200" y="102.200" width="1.800" height="1.200"/></g>
    <rect x="458.100" y="104.100" width="8.600" height="4.600" rx="1.800" fill="#fff" stroke="#fff" stroke-width="2.200"/>
    <rect x="458.700" y="104.700" width="7.400" height="3.400" rx="1.400" fill="#fff" stroke="#555" stroke-width="1.300"/>
  </g>
  <circle cx="485.800" cy="99.400" r="1.550" fill="#555"/><circle cx="491.500" cy="99.400" r="1.550" fill="#555"/><circle cx="497.200" cy="99.400" r="1.550" fill="#555"/>
</svg>
  <div id="menu">
<div class="mi" style="top:8.4px">Convert to Adobe Sign Form</div>
<div class="mi dis" style="top:37.2px">Duplicate Across Pages...</div>
<div class="mi dis" style="top:55.4px">Create Multiple Copies...</div>
<div class="mi" style="top:83.9px;left:34.500px">Show Tab Numbers</div>
<div class="mi dis" style="top:102.7px">Show Field Properties...</div>
<div class="mi" style="top:132.2px">Highlight Existing Fields</div>
<div class="mi" style="top:154.2px">Clear Form</div>
<div class="mi" style="top:185.2px">Import Data...</div>
<div class="mi" style="top:207.1px">Export Data...</div>
<div class="mi" style="top:229.6px">Merge Data Files into Spreadsheet...</div>
<div class="mi dis" style="top:258.5px">Set Field Calculation Order...</div>
<div class="sep" style="top:28.2px"></div>
<div class="sep" style="top:74.6px"></div>
<div class="sep" style="top:121.4px"></div>
<div class="sep" style="top:174.2px"></div>
</div>
</div>
<svg class="abs" style="left:0;top:0" width="750" height="589" viewBox="0 0 750 589">
  <!-- menu icons -->
  <g fill="none" stroke="#333" stroke-width="1.600" stroke-linejoin="round" stroke-linecap="round">
    <!-- convert to sign -->
    <path d="M532 331v-10.200h6.800l3.400 3.400v4.300M542.200 333v1.700h-3.600"/>
    <path d="M535.300 330.600c1.500-.6 2.400-2.600 3.200-2.300.8.300-.6 2.100.3 2.300.9.200 1.400-1.300 2.200-1.100.6.200.4 1.100 1.200 1.100h2.700" stroke-width="0.800"/>
    <path d="M528.300 331.300l3.700 3.600 3.700-3.600M532 334.500c0 1.500.8 1.700 2 1.700h1.200" stroke-width="1.400"/>
    <path d="M535 334l2.300 2.200-2.300 2.200z" fill="#3a3a3a" stroke-width="0.800"/>
    <!-- highlight -->
    <rect x="528" y="447.300" width="13.600" height="12" rx="1.500" stroke-width="1.400"/>
    <path d="M531 451.300h5M531 455.500h6" stroke="#666" stroke-width="1.700" stroke-linecap="butt"/>
    <path d="M545.500 451.700h-5.500M542 449.700l-2.200 2 2.200 2" stroke-width="1.300"/>
    <!-- clear form -->
    <path d="M528.500 469.500h14.500v5M528.500 469.500v10.200h8"/>
    <!-- import -->
    <path d="M533.500 498.600h5.500l3.600 3.600v10.500h-11.800v-7.500" stroke-width="1.400"/>
    <path d="M538.800 498.800v3.600h3.600" stroke-width="1"/>
    <rect x="533.300" y="506.800" width="7" height="3.800" rx="0.600" stroke-width="1.200"/>
    <path d="M528.300 499.300l3.600 3.600M532.200 500.200v3h-3" stroke-width="1.100"/>
    <!-- export -->
    <path d="M536 535h-5.200v-13.800h7.800l3.800 3.800v5" stroke-width="1.400"/>
    <path d="M538.400 521.400v3.800h3.800" stroke-width="1"/>
    <path d="M536.500 532.300h6.500M541 530.300l2.200 2-2.200 2" stroke-width="1.200"/>
    <!-- merge -->
    <rect x="530.700" y="545.600" width="13.400" height="10.400" rx="0.800" stroke-width="1.400"/>
    <path d="M530.700 549.200h13.400M530.700 552.600h13.400M535.200 545.600v10.400M539.700 545.600v10.400" stroke-width="0.900"/>
    <path d="M527.800 541.800l3.300 3.300M531.300 542.600v2.700h-2.700" stroke-width="1.100"/>
  </g>
  <path d="M531.500 522h6.800v3.500h3.500v4h-6v5h-4.300z" fill="#cfcfcf"/>
  <g fill="#3a3a3a">
    <rect x="527.400" y="468.400" width="2.200" height="2.200"/><rect x="541.900" y="468.400" width="2.200" height="2.200"/><rect x="527.400" y="478.600" width="2.200" height="2.200"/>
    <circle cx="541" cy="478.500" r="4.400" stroke="#ececec" stroke-width="0.800"/>
  </g>
  <path d="M539.300 476.800l3.400 3.400M542.700 476.800l-3.400 3.400" stroke="#fff" stroke-width="1.200"/>
  <text x="534.300" y="477.800" font-family="Liberation Serif, serif" font-weight="bold" font-size="8.500" fill="#3a3a3a" text-anchor="middle">T</text>
  <path d="M516 453.200l2.200 3.200 3.800-7" fill="none" stroke="#222" stroke-width="1.300"/>
  <rect x="506.300" y="543.500" width="3.300" height="7" rx="1.200" fill="#8e8e8e"/>
  <!-- red annotations -->
  <g fill="none" stroke="#e8202a" stroke-linejoin="round">
    <rect x="509.500" y="281.400" width="160.300" height="35.500" rx="3.500" stroke-width="3.100"/>
    <rect x="509.300" y="532.300" width="239.300" height="35.300" rx="4" stroke-width="3.300"/>
    <path d="M510 317C470 380 470 470 518 518.500" stroke-width="2.600"/>
  </g>
  <path d="M521.300 512.600l6 17.200-16.600-7.200c4.500-2 8.200-5.500 10.600-10z" fill="#e8202a"/>
  <!-- screenshot border -->
  <path d="M0 0h750v589h-750z M2 2v585h746v-585z" fill="#9a9a9a" fill-rule="evenodd"/>
</svg>
</body>
</html>
